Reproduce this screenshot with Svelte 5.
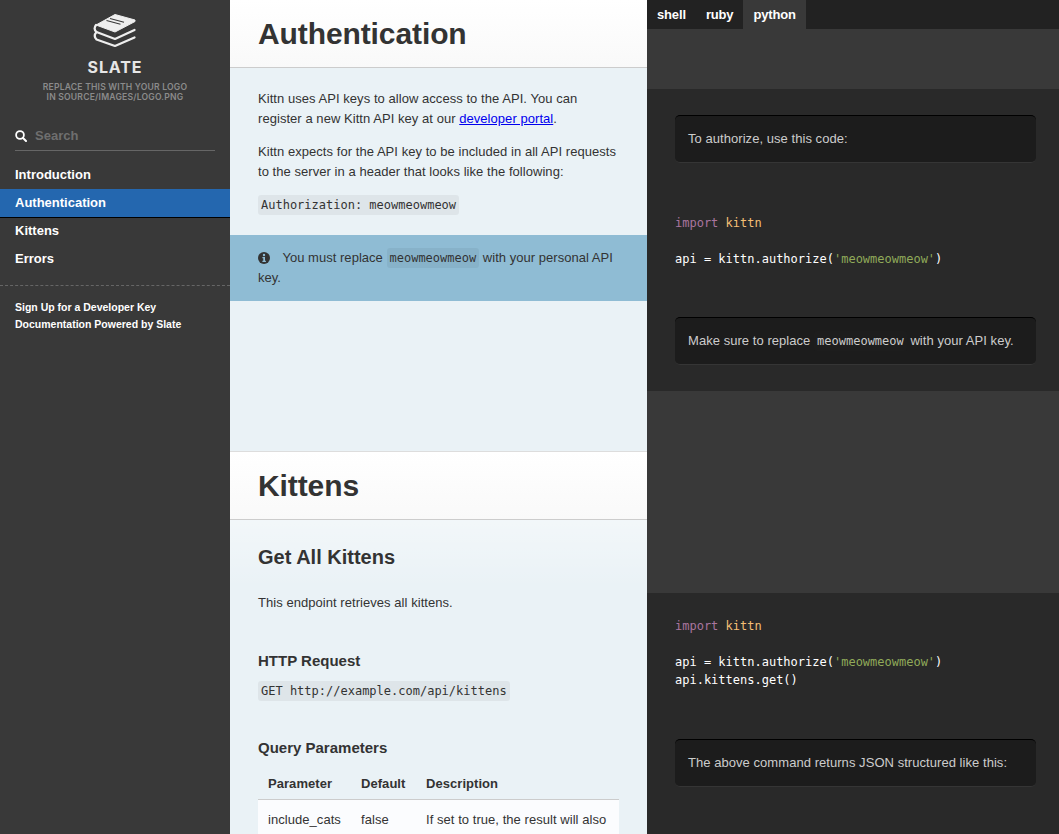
<script>
  const tabs = ['shell', 'ruby', 'python'];
  const nav = ['Introduction', 'Authentication', 'Kittens', 'Errors'];
</script>

<div class="page">
  <aside class="sidebar">
    <div class="logo">
      <svg class="books" width="44" height="34" viewBox="0 0 44 34" aria-hidden="true">
        <path d="M3 12 L22 1.5 L42 7 L42 8.5 L22 19 Z" fill="#eee" stroke="#eee" stroke-width="1" stroke-linejoin="round"/>
        <path d="M17 5.5 L31 9.3 M13.5 7.5 L27.5 11.3" stroke="#393939" stroke-width="1.1" fill="none"/>
        <path d="M3 12 Q0 16 3.5 19 L22 26 L41.5 17" fill="none" stroke="#eee" stroke-width="2.2" stroke-linejoin="round" stroke-linecap="round"/>
        <path d="M3.5 19 Q0 23 3.5 26.5 L22 33 L41.5 24.5" fill="none" stroke="#eee" stroke-width="2.2" stroke-linejoin="round" stroke-linecap="round"/>
      </svg>
      <div class="slate">SLATE</div>
      <div class="tagline">REPLACE THIS WITH YOUR LOGO<br />IN SOURCE/IMAGES/LOGO.PNG</div>
    </div>
    <div class="search">
      <svg width="12" height="12" viewBox="0 0 12 12" aria-hidden="true">
        <circle cx="5" cy="5" r="3.9" fill="none" stroke="#fff" stroke-width="1.8"/>
        <path d="M8 8 L11 11" stroke="#fff" stroke-width="2" stroke-linecap="round"/>
      </svg>
      <span>Search</span>
    </div>
    <ul class="nav">
      {#each nav as item}
        <li class:active={item === 'Authentication'}>{item}</li>
      {/each}
    </ul>
    <ul class="footer-links">
      <li>Sign Up for a Developer Key</li>
      <li>Documentation Powered by Slate</li>
    </ul>
  </aside>

  <main class="content">
    <h1>Authentication</h1>
    <div class="auth">
      <p>Kittn uses API keys to allow access to the API. You can register a new Kittn API key at our <a href="#top">developer portal</a>.</p>
      <p>Kittn expects for the API key to be included in all API requests to the server in a header that looks like the following:</p>
      <p><code>Authorization: meowmeowmeow</code></p>
    </div>
    <aside class="notice">
      <svg width="12" height="12" viewBox="0 0 12 12" aria-hidden="true">
        <circle cx="6" cy="6" r="6" fill="#333"/>
        <circle cx="6" cy="3" r="1.2" fill="#8fbcd4"/>
        <path d="M4.4 5 H7 V8.7 H7.9 V9.9 H4.4 V8.7 H5.3 V6.2 H4.4 Z" fill="#8fbcd4"/>
      </svg>
      You must replace <code>meowmeowmeow</code> with your personal API key.
    </aside>
    <h1 class="second">Kittens</h1>
    <h2>Get All Kittens</h2>
    <p class="endpoint">This endpoint retrieves all kittens.</p>
    <h3>HTTP Request</h3>
    <p class="req"><code>GET http://example.com/api/kittens</code></p>
    <h3 class="qp">Query Parameters</h3>
    <table>
      <thead>
        <tr><th>Parameter</th><th>Default</th><th>Description</th></tr>
      </thead>
      <tbody>
        <tr>
          <td>include_cats</td>
          <td>false</td>
          <td>If set to true, the result will also include cats.</td>
        </tr>
      </tbody>
    </table>
  </main>

  <section class="dark">
    <div class="tabs">
      {#each tabs as t}
        <span class="tab" class:on={t === 'python'}>{t}</span>
      {/each}
    </div>
    <div class="g1"></div>
    <div class="block b1">
      <blockquote>To authorize, use this code:</blockquote>
      <pre class="hl one"><span class="kw">import</span> <span class="mod">kittn</span>

api = kittn.authorize(<span class="str">'meowmeowmeow'</span>)</pre>
      <blockquote>Make sure to replace <code>meowmeowmeow</code> with your API key.</blockquote>
    </div>
    <div class="g2"></div>
    <div class="block b2">
      <pre class="hl two"><span class="kw">import</span> <span class="mod">kittn</span>

api = kittn.authorize(<span class="str">'meowmeowmeow'</span>)
api.kittens.get()</pre>
      <blockquote>The above command returns JSON structured like this:</blockquote>
    </div>
  </section>
</div>

<style>
  :global(body) {
    margin: 0;
    overflow: hidden;
    font-family: "Liberation Sans", Arial, sans-serif;
    font-size: 13px;
    line-height: 20px;
    letter-spacing: 0.05px;
    color: #333;
  }
  .page {
    display: grid;
    grid-template-columns: 230px 417px 1fr;
    height: 834px;
    overflow: hidden;
  }
  .sidebar {
    background: #393939;
    color: #fff;
    font-weight: bold;
    letter-spacing: 0;
  }
  .logo {
    display: flex;
    flex-direction: column;
    align-items: center;
    padding-top: 13px;
  }
  .books { display: block; }
  .slate {
    font-family: Inter, sans-serif;
    font-weight: 700;
    font-size: 16px;
    line-height: 18px;
    letter-spacing: 0.9px;
    color: #e6e6e6;
    margin-top: 11px;
  }
  .tagline {
    font-family: Inter, sans-serif;
    font-weight: 600;
    font-size: 8.6px;
    line-height: 10px;
    letter-spacing: 0.2px;
    color: #8b8b8b;
    text-align: center;
    margin-top: 6px;
  }
  .search {
    margin: 20px 15px 0;
    height: 28px;
    border-bottom: 1px solid #666;
    display: flex;
    align-items: center;
    gap: 8px;
    color: #6f6f6f;
  }
  .nav, .footer-links { list-style: none; margin: 0; padding: 0; }
  .nav { margin-top: 10px; padding-bottom: 12px; border-bottom: 1px dashed #666; }
  .nav li { height: 28px; line-height: 28px; padding-left: 15px; }
  .nav li.active {
    background: #2467af;
    box-shadow: 0 1px 0 #000;
  }
  .footer-links { margin-top: 13px; font-size: 10.5px; }
  .footer-links li { height: 17px; line-height: 17px; padding-left: 15px; }

  .content { background: #eaf2f6; min-width: 0; }
  h1 {
    margin: 0;
    height: 67px;
    line-height: 67px;
    padding: 0 28px;
    font-size: 30px;
    font-weight: bold;
    letter-spacing: -0.1px;
    color: #333;
    background: linear-gradient(#fff, #f9f9f9);
    border-bottom: 1px solid #ccc;
  }
  h1.second { border-top: 1px solid #ddd; margin-top: 150px; }
  .auth { padding: 21px 28px 0; }
  p { margin: 0 0 13px; }
  a { color: #00e; text-decoration: underline; }
  code {
    font-family: "DejaVu Sans Mono", monospace;
    font-size: 12px;
    letter-spacing: 0;
    padding: 3px;
    border-radius: 3px;
    background: rgba(0, 0, 0, 0.05);
  }
  .notice {
    margin-top: 20px;
    background: #8fbcd4;
    padding: 13px 28px;
    letter-spacing: 0.03px;
  }
  .notice svg { vertical-align: -2px; margin-right: 9px; }
  h2 {
    margin: 0;
    padding: 27px 28px 0;
    height: 40px;
    line-height: 20px;
    font-size: 20px;
    font-weight: bold;
    letter-spacing: 0;
    background: linear-gradient(rgba(255,255,255,0.4), rgba(255,255,255,0));
  }
  .endpoint { padding: 6px 28px 0; margin: 0; }
  h3 {
    margin: 38px 0 0;
    padding: 0 28px;
    font-size: 15px;
    font-weight: bold;
    line-height: 20px;
    letter-spacing: 0;
  }
  .req { padding: 0 28px; margin: 10px 0 0; }
  h3.qp { margin-top: 37px; }
  table {
    margin: 11px 28px 0;
    width: 361px;
    border-collapse: collapse;
    table-layout: fixed;
  }
  th {
    text-align: left;
    padding: 5px 10px;
    border-bottom: 1px solid #ccc;
  }
  th:nth-child(1) { width: 73px; }
  th:nth-child(2) { width: 45px; }
  td {
    background: #fbfcfe;
    padding: 10px;
    line-height: 19px;
    vertical-align: top;
  }

  .dark {
    background: #393939;
    color: #fff;
    min-width: 0;
  }
  .tabs {
    height: 29px;
    background: #222;
    display: flex;
    font-weight: bold;
    letter-spacing: -0.15px;
  }
  .tab { padding: 0 10px; line-height: 29px; }
  .tab.on { background: #393939; }
  .g1 { height: 60px; }
  .g2 { height: 202px; }
  .block { background: #292929; padding: 26px 23px 0 28px; }
  .b1 { box-sizing: border-box; height: 302px; }
  .b2 { height: 400px; padding-top: 24px; }
  blockquote {
    margin: 0;
    background: #1c1c1c;
    border-radius: 5px;
    border-top: 1px solid #000;
    border-bottom: 1px solid #353535;
    padding: 13px;
    color: #ccc;
  }
  blockquote code { background: #1d1d1d; color: #ccc; }
  .hl {
    margin: 0;
    font-family: "DejaVu Sans Mono", monospace;
    font-size: 12px;
    line-height: 18px;
    letter-spacing: 0;
    color: #fff;
  }
  .one { margin: 51px 0 49px; }
  .two { margin: 0 0 50px; }
  .kw { color: #aa759f; }
  .mod { color: #f4bf75; }
  .str { color: #90a959; }
</style>
